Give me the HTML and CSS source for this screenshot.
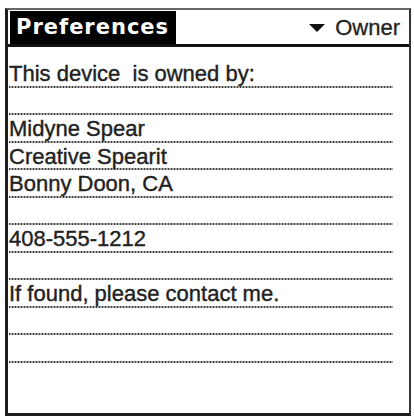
FILE: index.html
```html
<!DOCTYPE html>
<html>
	<head>
		<meta charset="UTF-8">
		<title>Preferences</title>
		<link rel="stylesheet" href="styles.css">
	</head>
	<body>
		<div id="screen">
			<div class="titlebar">
				<div class="tab">Preferences</div>
				<div class="picker">
					<svg class="arrow" width="16" height="8" viewBox="0 0 16 8"><polygon points="0,0 16,0 8,8" fill="#111"/></svg>
					<span>Owner</span>
				</div>
			</div>
			<div class="fields">
				<div class="field">This device&nbsp; is owned by:</div>
				<div class="field"></div>
				<div class="field">Midyne Spear</div>
				<div class="field">Creative Spearit</div>
				<div class="field">Bonny Doon, CA</div>
				<div class="field"></div>
				<div class="field">408-555-1212</div>
				<div class="field"></div>
				<div class="field">If found, please contact me.</div>
				<div class="field"></div>
				<div class="field"></div>
			</div>
		</div>
	</body>
</html>
```

FILE: styles.css
```css
html, body {
	margin: 0;
	padding: 0;
	background: #fff;
}
body {
	width: 414px;
	height: 418px;
	overflow: hidden;
	font-family: "Liberation Sans", Arial, sans-serif;
	color: #1e1e1e;
}
#screen {
	margin: 8px 3px 2px 5px;
	height: 403px;
	border-top: 2px solid #666;
	border-left: 3px solid #1e1e1e;
	border-right: 2px solid #333;
	border-bottom: 3px solid #1e1e1e;
}
.titlebar {
	display: flex;
	align-items: flex-start;
	height: 33px;
	padding: 1px 0 0 2px;
	border-bottom: 3px solid #111;
}
.titlebar .tab {
	width: 160px;
	height: 33px;
	padding-left: 6px;
	background: #000;
	color: #fff;
	font-family: "DejaVu Sans", sans-serif;
	font-weight: bold;
	font-size: 21px;
	letter-spacing: 1px;
	line-height: 33px;
}
.titlebar .picker {
	margin-left: auto;
	display: flex;
	align-items: center;
	gap: 10px;
	padding-right: 9px;
	height: 33px;
	font-size: 22px;
	color: #222;
	-webkit-text-stroke: 0.3px #222;
}
.titlebar .arrow {
	margin-top: 1px;
}
.fields {
	padding: 13px 16px 0 1px;
}
.field {
	height: 27.5px;
	line-height: 27px;
	font-size: 22px;
	color: #222;
	-webkit-text-stroke: 0.4px #222;
	white-space: nowrap;
	background-image: repeating-linear-gradient(90deg, #3a3a3a 0 1.5px, #a8a8a8 1.5px 3px);
	background-size: 100% 2px;
	background-repeat: no-repeat;
	background-position: left bottom;
}
```
